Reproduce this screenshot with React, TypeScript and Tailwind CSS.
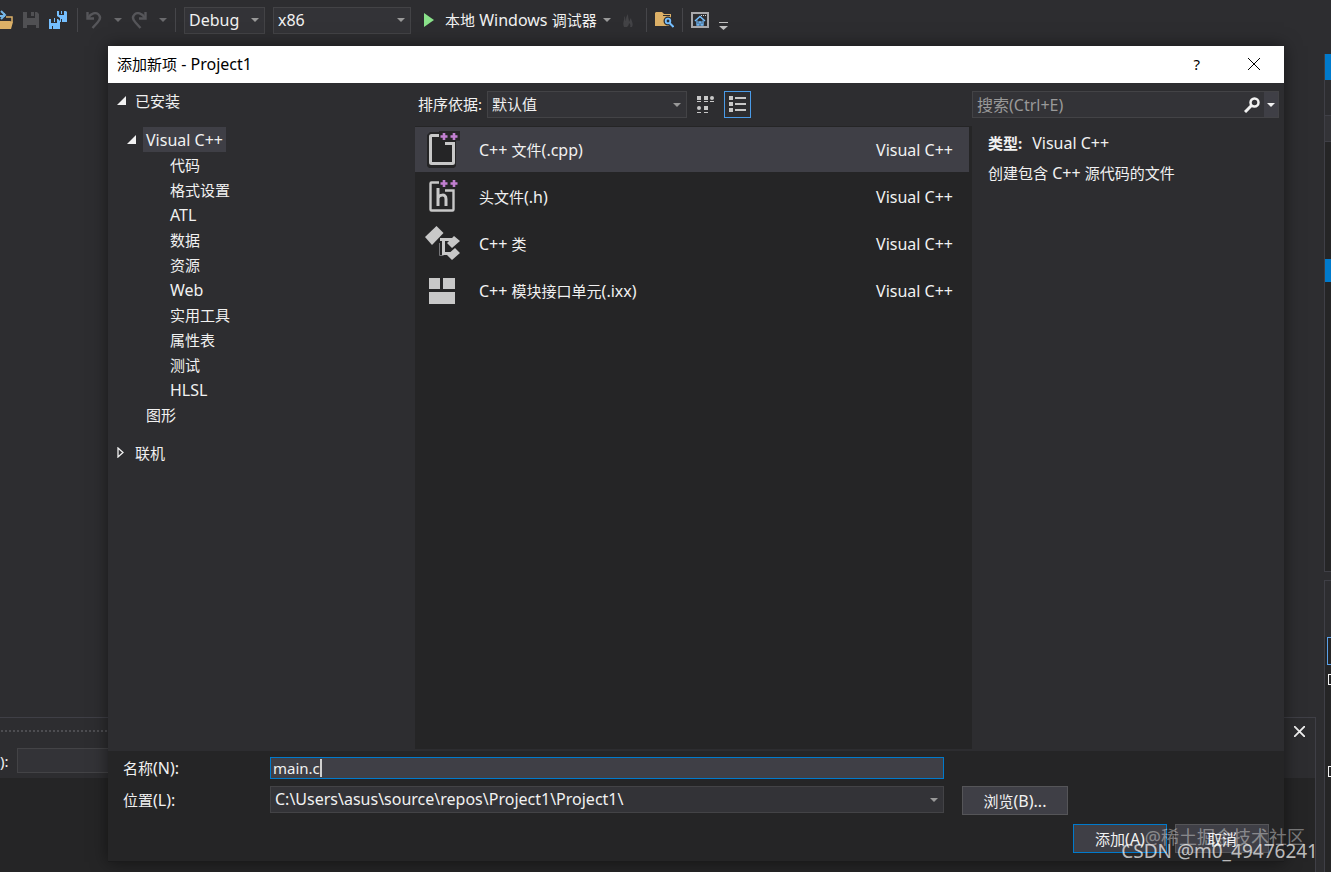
import type { ReactNode } from 'react';
import clsx from 'clsx';

const categories = ['代码', '格式设置', 'ATL', '数据', '资源', 'Web', '实用工具', '属性表', '测试', 'HLSL'];

const templates = [
    { name: 'C++ 文件(.cpp)', icon: <CppFileIcon /> },
    { name: '头文件(.h)', icon: <HeaderFileIcon /> },
    { name: 'C++ 类', icon: <ClassIcon /> },
    { name: 'C++ 模块接口单元(.ixx)', icon: <ModuleIcon /> },
];

// Latin runs are set one size up so they balance with the Chinese glyphs
function Mixed({ text }: { text: string }) {
    return (
        <span className="whitespace-pre">
            {text.split(/([\x20-\x7e]+)/).map((part, i) => (i % 2 ? <span key={i} className="text-[16px]">{part}</span> : part))}
        </span>
    );
}

function Caret({ className = 'text-[#999999]' }: { className?: string }) {
    return (
        <svg width="8" height="4" viewBox="0 0 8 4" className={clsx('shrink-0', className)} fill="currentColor">
            <path d="M0 0h8L4 4z" />
        </svg>
    );
}

function SaveIcon() {
    return (
        <svg width="16" height="16" viewBox="0 0 16 16" fill="#505053">
            <path d="M0 0h4v6h8V0h2l2 2v14h-3v-4H4v4H0z" />
            <path d="M8 0h3v4H8zM3 6h10v7H3z" />
        </svg>
    );
}

function OpenIcon() {
    return (
        <svg width="13" height="20" viewBox="0 0 13 20" fill="none">
            <path d="M0 6h4V3" stroke="#75b7e8" strokeWidth="2" />
            <path d="M1 1l4 4-4 4" stroke="#75b7e8" strokeWidth="2" />
            <path d="M6 7h6v5" stroke="#dcb067" strokeWidth="1.5" />
            <path d="M0 11h10l3 1-2 7H0z" fill="#dcb067" />
        </svg>
    );
}

function SaveAllIcon() {
    return (
        <svg width="18" height="18" viewBox="0 0 18 18" fill="#75bfff">
            <path d="M8 0h2v4h5V0h2l1 1v10h-7V7L8 5z" />
            <path d="M0 8h2v4h6V8h1l2 2v8H0z" />
            <path d="M5 7h1v4H5zM12 0h1v3h-1z" />
            <path d="M3 15h1v3H3zM12 8h1v3h-1z" fill="#2d2d30" />
        </svg>
    );
}

function UndoIcon({ flip }: { flip?: boolean }) {
    return (
        <svg width="16" height="17" viewBox="0 0 16 17" fill="none" stroke="#56565a" strokeWidth="2.4" className={flip ? '-scale-x-100' : ''}>
            <path d="M1.5 0v6.5H8" />
            <path d="M2 6C5 1 10 0 12.500 2.500c3 3 1 6-1 8L6.500 16" />
        </svg>
    );
}

function FlameIcon() {
    return (
        <svg width="11" height="13" viewBox="0 0 11 13" fill="#434346">
            <path d="M1 2c2 2 1 4 2 5 0-3 0-4 2-7 0 4 1 5 1 8 1-2 1-3 2-4 0 3 3 5 1 9H7c1-2 0-3-1-4 0 2-1 3-2 4H1C-1 8 2 7 1 2z" />
        </svg>
    );
}

function FolderSearchIcon() {
    return (
        <svg width="19" height="16" viewBox="0 0 19 16" fill="none">
            <path d="M0 1l1-1h6l2 2h7v12H0z" fill="#dcb067" />
            <path d="M8 3.500h7" stroke="#2d2d30" />
            <path d="M14 10l5 5" stroke="#2d2d30" strokeWidth="5" />
            <circle cx="13" cy="9" r="2.500" fill="#2d2d30" stroke="#2d2d30" strokeWidth="4" />
            <circle cx="13" cy="9" r="2.300" stroke="#75bfff" strokeWidth="1.800" />
            <path d="M14.500 11l4 4" stroke="#75bfff" strokeWidth="2" />
        </svg>
    );
}

function StartWindowIcon() {
    return (
        <svg width="18" height="16" viewBox="0 0 18 16" fill="none">
            <rect x="1" y="1" width="16" height="14" stroke="#a9a9ac" strokeWidth="2" />
            <path d="M10 3.500h1M12 3.500h1M14 3.500h1" stroke="#d0d0d0" />
            <path d="M4 9l5-4.500L14 9" stroke="#75bfff" strokeWidth="1.500" />
            <path d="M6 8.500V13h2v-3h2v3h2V8.500" stroke="#75bfff" strokeWidth="1.300" />
        </svg>
    );
}

function PlusPlus() {
    return (
        <g>
            <path d="M14 0h21v9.500H14z" fill="#252526" />
            <path d="M19 2v7M15.500 5.500h7M29 2v7M25.500 5.500h7" stroke="#c17fd0" strokeWidth="2.600" />
        </g>
    );
}

function CppFileIcon() {
    return (
        <svg width="36" height="38" viewBox="0 0 36 38" fill="none">
            <path d="M2 4l3-3h26v34l-2 2H4l-2-2z" fill="#252526" />
            <path d="M15 4.500H6.500q-1 0-1 1v26q0 1 1 1h21q1 0 1-1V12.500H20" stroke="#c8c8c8" strokeWidth="3" />
            <PlusPlus />
        </svg>
    );
}

function HeaderFileIcon() {
    return (
        <svg width="36" height="38" viewBox="0 0 36 38" fill="none">
            <path d="M15 4.500H6.500q-1 0-1 1v26q0 1 1 1h21q1 0 1-1V12.500H20" stroke="#c8c8c8" strokeWidth="2.400" />
            <PlusPlus />
            <path d="M13 10v18M13 20c1-3 8-5 8 1v7" stroke="#c8c8c8" strokeWidth="3" />
        </svg>
    );
}

function ClassIcon() {
    return (
        <svg width="36" height="38" viewBox="0 0 36 38" fill="none">
            <path d="M0 12L11.500 1l7 7L7 20z" fill="#c8c8c8" />
            <path d="M15 14.500h14M18.500 14v14.500H26" stroke="#c8c8c8" strokeWidth="3" />
            <path d="M14.500 18v12.500h4" stroke="#77777a" />
            <path d="M22 18l7-7 6 5-8 7zM22 30l8-7 5 5-8 7z" fill="#c8c8c8" />
        </svg>
    );
}

function ModuleIcon() {
    return (
        <svg width="36" height="38" viewBox="0 0 36 38" fill="#c8c8c8">
            <path d="M4 6h11v11H4zM18 6h12v11H18zM4 20h26v12H4z" />
        </svg>
    );
}

function SmallIconsIcon() {
    return (
        <svg width="17" height="19" viewBox="0 0 17 19" fill="#c8c8c8">
            <path d="M0 1h4v4H0zM7 1h4v4H7zM0 6h4v1H0zM7 6h4v1H7zM13 6h4v1h-4zM7 11h4v4H7zM0 17h4v1H0zM7 17h4v1H7z" />
            <circle cx="15" cy="3" r="2" />
            <circle cx="2" cy="13" r="2" />
        </svg>
    );
}

function ListIcon() {
    return (
        <svg width="19" height="19" viewBox="0 0 19 19" fill="#c8c8c8">
            <path d="M1 1h4v4H1zM1 7h4v4H1zM1 13h4v4H1zM7 2h11v2H7zM7 8h11v2H7zM7 14h11v2H7z" />
        </svg>
    );
}

function Cross({ size, stroke }: { size: number; stroke: number }) {
    return (
        <svg width={size} height={size} viewBox="0 0 12 12" stroke="currentColor" strokeWidth={stroke}>
            <path d="M0 0l12 12M12 0L0 12" />
        </svg>
    );
}

function Divider() {
    return <span className="h-6 w-px shrink-0 bg-[#46464a]" />;
}

function Dropdown({ id, label, value, className }: { id?: string; label: string; value: string; className?: string }) {
    return (
        <div className={clsx('relative flex h-[27px] items-center border border-[#434346] bg-[#333337]', className)}>
            <select id={id} aria-label={label} className="h-full w-full appearance-none bg-transparent pb-0.5 pl-1 pr-5 text-[#f1f1f1] outline-none">
                <option>{value}</option>
            </select>
            <span className="pointer-events-none absolute right-[5px]">
                <Caret />
            </span>
        </div>
    );
}

function Toolbar() {
    return (
        <div className="flex h-10 shrink-0 items-center">
            <button aria-label="打开" className="mr-2.5"><OpenIcon /></button>
            <button aria-label="保存" className="mr-2.5"><SaveIcon /></button>
            <button aria-label="全部保存" className="mr-2.5"><SaveAllIcon /></button>
            <Divider />
            <button aria-label="撤消" className="ml-2 mr-[9px] flex items-center gap-3">
                <UndoIcon />
                <Caret className="text-[#6a6a6d]" />
            </button>
            <button aria-label="重做" className="mr-2 flex items-center gap-3">
                <UndoIcon flip />
                <Caret className="text-[#6a6a6d]" />
            </button>
            <Divider />
            <Dropdown label="解决方案配置" value="Debug" className="ml-2 w-[81px] text-base" />
            <Dropdown label="解决方案平台" value="x86" className="ml-2 w-[138px] text-base" />
            <button className="ml-[13px] flex items-center whitespace-nowrap">
                <svg width="10" height="14" viewBox="0 0 10 14" fill="#8ae28a" className="mr-[11px]">
                    <path d="M0 0l10 7-10 7z" />
                </svg>
                <Mixed text="本地 Windows 调试器" />
                <Caret className="ml-1.5 text-[#999999]" />
            </button>
            <button aria-label="热重载" className="mx-3"><FlameIcon /></button>
            <Divider />
            <button aria-label="在文件中查找" className="mx-2"><FolderSearchIcon /></button>
            <Divider />
            <button aria-label="起始页" className="ml-2"><StartWindowIcon /></button>
            <button aria-label="工具栏选项" className="ml-2.5 mt-3">
                <svg width="9" height="9" viewBox="0 0 9 9" fill="#c0c0c0">
                    <path d="M0 0h9v1H0zM0 4h9L4.500 8z" />
                </svg>
            </button>
        </div>
    );
}

/* Main window behind the dialog */
function Workspace() {
    return (
        <div className="flex flex-1 gap-2">
            <div className="flex flex-1 flex-col justify-end">
                <section className="flex h-[155px] flex-col border-r border-t border-[#3f3f46]">
                    <div className="flex h-[30px] items-center pb-1 pr-2.5">
                        <span className="h-1 flex-1 bg-[radial-gradient(#4d4d51_1px,transparent_1px)] bg-[length:4px_4px]" />
                        <button aria-label="关闭" className="ml-4 text-[#f1f1f1]"><Cross size={11} stroke={2} /></button>
                    </div>
                    <label className="mb-[5px] flex h-[25px] items-center gap-2">
                        ):
                        <input className="h-[25px] w-60 border border-[#434346] bg-[#333337]" />
                    </label>
                    <div className="flex-1 bg-[#252526]" />
                </section>
            </div>
            <aside className="flex w-[7px] flex-col overflow-hidden pt-3.5">
                <div className="flex h-[518px] shrink-0 flex-col border-b border-l border-[#3f3f46] bg-[#252526]">
                    <div className="h-[26px] bg-[#007acc]" />
                    <div className="h-[35px] bg-[#2d2d30]" />
                    <div className="h-[27px] border-y border-[#3f3f46] bg-[#333337]" />
                    <div className="mt-[117px] h-[23px] bg-[#007acc]" />
                </div>
                <div className="mt-2 flex flex-1 flex-col border-l border-t border-[#3f3f46] bg-[#252526]">
                    <div className="h-[56px] bg-[#2d2d30]" />
                    <div className="ml-0.5 h-[28px] w-6 border border-[#5aa0e8]" />
                    <div className="ml-[3px] mt-[9px] h-[11px] w-[11px] border border-[#f1f1f1]" />
                    <div className="ml-[3px] mt-[81px] h-[11px] w-[11px] border border-[#f1f1f1]" />
                </div>
            </aside>
        </div>
    );
}

function TreeRow({ className, children }: { className?: string; children: ReactNode }) {
    return <button className={clsx('flex h-[25px] items-center', className)}>{children}</button>;
}

function ExpandedArrow() {
    return (
        <svg width="9" height="9" viewBox="0 0 9 9" fill="#f1f1f1">
            <path d="M9 0v9H0z" />
        </svg>
    );
}

function CategoryTree() {
    return (
        <nav className="flex w-[307px] shrink-0 flex-col items-start pt-[5px]">
            <TreeRow className="gap-[9px] pl-[9px]"><ExpandedArrow />已安装</TreeRow>
            <TreeRow className="mt-3.5 gap-[7px] pl-[19px]">
                <ExpandedArrow />
                <span className="flex h-full items-center bg-[#3f3f46] px-[3px] text-base">Visual C++</span>
            </TreeRow>
            <ul>
                {categories.map((c) => (
                    <li key={c}><TreeRow className="pl-[62px]"><Mixed text={c} /></TreeRow></li>
                ))}
            </ul>
            <TreeRow className="pl-[38px]">图形</TreeRow>
            <TreeRow className="mt-[13px] gap-[11px] pl-[9px]">
                <svg width="7" height="11" viewBox="0 0 7 11" fill="none" stroke="#f1f1f1" strokeWidth="1.300">
                    <path d="M1 1l5 4.500L1 10z" />
                </svg>
                联机
            </TreeRow>
        </nav>
    );
}

function TemplateList() {
    return (
        <div className="flex min-w-0 flex-1 flex-col">
            <div className="flex h-[43px] items-center pl-[3px]">
                <label htmlFor="sort-order" className="mr-[5px] pb-0.5">排序依据:</label>
                <Dropdown id="sort-order" label="排序依据" value="默认值" className="w-[200px]" />
                <button aria-label="小图标" className="ml-2.5"><SmallIconsIcon /></button>
                <button aria-label="列表" className="ml-2.5 flex h-[27px] w-[27px] items-center justify-center border border-[#4a9be8]">
                    <ListIcon />
                </button>
            </div>
            <ul className="flex flex-1 flex-col gap-0.5 bg-[#252526] pr-[3px] pt-px">
                {templates.map((t, i) => (
                    <li key={t.name}>
                        <button className={clsx('flex h-[45px] w-full items-center pl-2.5 pr-4', i === 0 && 'bg-[#3f3f46]')}>
                            {t.icon}
                            <span className="ml-[18px] flex-1 text-left"><Mixed text={t.name} /></span>
                            <span className="text-base leading-5">Visual C++</span>
                        </button>
                    </li>
                ))}
            </ul>
        </div>
    );
}

function DetailPane() {
    return (
        <div className="w-[312px] shrink-0 pr-[5px]">
            <div className="mt-2 flex h-[27px] items-center border border-[#434346] bg-[#333337]">
                <input aria-label="搜索" placeholder="搜索(Ctrl+E)" className="min-w-0 flex-1 bg-transparent pl-1 text-base outline-none placeholder:text-[#999999]" />
                <button aria-label="开始搜索" className="mr-1">
                    <svg width="16" height="16" viewBox="0 0 16 16" fill="none" stroke="#f1f1f1">
                        <circle cx="10.500" cy="5.500" r="4" strokeWidth="2.500" />
                        <path d="M7.500 8.500L1 15" strokeWidth="3" />
                    </svg>
                </button>
                <button aria-label="搜索选项" className="flex h-full w-[14px] items-center justify-center bg-[#3f3f46]">
                    <Caret className="text-[#f1f1f1]" />
                </button>
            </div>
            <div className="pl-4 pt-[10px]">
                <p className="flex h-[30px] items-center gap-2.5">
                    <b>类型:</b>
                    <span className="text-base">Visual C++</span>
                </p>
                <p className="flex h-[30px] items-center"><Mixed text="创建包含 C++ 源代码的文件" /></p>
            </div>
        </div>
    );
}

function DialogFooter() {
    return (
        <div className="h-[111px] shrink-0 border-b border-[#1b1b1c] bg-[#252526] pl-[15px] pt-1.5">
            <div className="mr-[216px] grid grid-cols-[147px_1fr_106px] items-start">
                <label htmlFor="item-name" className="flex h-[29px] items-center pb-2"><Mixed text="名称(N):" /></label>
                <div className="mr-[18px] flex h-[22px] items-center border border-[#007acc] bg-[#3f3f46] pl-0.5">
                    <input id="item-name" defaultValue="main.c" className="field-sizing-content bg-transparent outline-none" />
                    <span className="h-[18px] w-0.5 bg-[#d0d0d0]" />
                </div>
                <span />
                <label htmlFor="item-location" className="flex h-[29px] items-center pb-px"><Mixed text="位置(L):" /></label>
                <Dropdown id="item-location" label="位置(L)" value="C:\Users\asus\source\repos\Project1\Project1\" className="mr-[18px] text-base" />
                <button className="h-[29px] border border-[#555558] bg-[#3f3f46]"><Mixed text="浏览(B)..." /></button>
            </div>
            <div className="mt-[9px] flex justify-end gap-2 pr-[15px]">
                <button className="h-[29px] w-[94px] border border-[#007acc] bg-[#3f3f46]"><Mixed text="添加(A)" /></button>
                <button className="h-[29px] w-[94px] border border-[#555558] bg-[#3f3f46]">取消</button>
            </div>
        </div>
    );
}

function NewItemDialog() {
    return (
        <div role="dialog" aria-label="添加新项" className="flex flex-1 flex-col bg-[#2d2d30] shadow-[0_0_16px_rgba(0,0,0,0.5)]">
            <div className="flex h-[37px] shrink-0 items-center bg-white pb-0.5 pl-[9px] pr-6 text-black">
                <h1 className="flex-1"><Mixed text="添加新项 - Project1" /></h1>
                <button aria-label="帮助" className="mr-12">?</button>
                <button aria-label="关闭"><Cross size={12} stroke={1} /></button>
            </div>
            <div className="flex flex-1 pb-0.5">
                <CategoryTree />
                <TemplateList />
                <DetailPane />
            </div>
            <DialogFooter />
        </div>
    );
}

export default function App() {
    return (
        <div className="relative flex min-h-screen flex-col overflow-hidden bg-[#2d2d30] font-['Noto_Sans','Noto_Sans_CJK_SC',sans-serif] text-[15px] leading-5 text-[#f1f1f1]">
            <Toolbar />
            <Workspace />
            <div className="absolute inset-0 flex pb-2.5 pl-[108px] pr-[47px] pt-[46px]">
                <NewItemDialog />
            </div>
            {/* Watermarks */}
            <div className="pointer-events-none absolute bottom-[23px] right-[26px] text-lg leading-6 text-white/40">@稀土掘金技术社区</div>
            <div className="pointer-events-none absolute bottom-[9px] right-[13px] text-[19px] leading-6 text-white/70">CSDN @m0_49476241</div>
        </div>
    );
}
